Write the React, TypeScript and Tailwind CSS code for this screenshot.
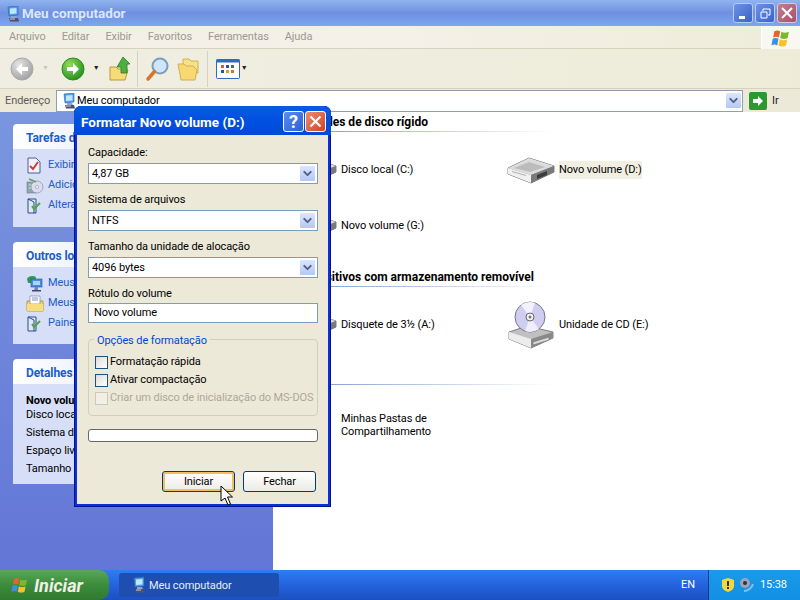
import { ChevronDown } from "lucide-react";
import type { ReactNode } from "react";

const font = "font-['Roboto','Liberation_Sans',sans-serif]";

function ComputerIcon({ size = 16 }: { size?: number }) {
  return (
    <svg width={size} height={size} viewBox="0 0 16 16">
      <path d="M3 1 13 0v9L4 10z" fill="#4f9ce8" stroke="#2a5fa8" strokeWidth="0.6" />
      <path d="M5 2.500 11.500 2v5.500L5 8z" fill="#bfe6ff" />
      <path d="M6 10h5l1 2H6z" fill="#8aa4d8" />
      <path d="M4 12h9l1 3.500H5z" fill="#50506c" />
      <path d="M5 12.500h5v1H5z" fill="#c8ccd8" />
    </svg>
  );
}

function FlagIcon({ size = 24 }: { size?: number }) {
  return (
    <svg width={size} height={size} viewBox="0 0 24 24">
      <path d="M4 4c2.500-1.500 4.500-1.500 7 0l-1.500 7.500c-2.500-1.500-4.500-1.500-7 0z" fill="#e8622c" />
      <path d="M12.500 4.500c3 1.500 5.500 1.500 9 0L20 12c-3 1.500-6 1.500-9 0z" fill="#7cb82f" />
      <path d="M2 13c2.500-1.500 4.500-1.500 7 0l-1.500 8c-2.500-1.500-4.500-1.500-7 0z" fill="#3f8fe0" />
      <path d="M10.500 13.500c3 1.500 6 1.500 9 0l-1.500 7.500c-3 1.500-6 1.500-9 0z" fill="#f5c22e" />
    </svg>
  );
}

function DriveIcon() {
  return (
    <svg width="48" height="28" viewBox="0 0 48 28">
      <path d="M1 12 22 2l25 8v6L24 27 1 18z" fill="#8c8c8c" stroke="#4c4c4c" strokeWidth="0.7" />
      <path d="M1 12 22 2l25 8-23 9z" fill="#dcdcdc" />
      <path d="M7 12 22 6l16 5-15 5z" fill="#bcbcbc" />
      <path d="M1 12l23 7v8L1 18z" fill="#f0f0f0" />
      <path d="M24 19l23-9v6L24 27z" fill="#7a7a7a" />
      <path d="M30 19l10-4v4l-10 4z" fill="#3c3c3c" />
      <path d="M5 15l14 4v1L5 16z" fill="#b0b0b0" />
    </svg>
  );
}

function CdIcon() {
  return (
    <svg width="48" height="48" viewBox="0 0 48 48">
      <path d="M2 31 20 25l26 6v6L24 47 2 38z" fill="#c0c0c0" stroke="#555" strokeWidth="0.7" />
      <path d="M2 31l22 7v9L2 38z" fill="#ececec" />
      <path d="M24 38l22-7v6L24 47z" fill="#8a8a8a" />
      <path d="M26 41l16-5v3l-16 5z" fill="#dadada" stroke="#666" strokeWidth="0.5" />
      <circle cx="23" cy="16" r="15" fill="#cfcdf0" stroke="#77778a" />
      <path d="M23 16 14 4a15 15 0 0 1 14-2z" fill="#f2f2ff" />
      <path d="M23 16l9 12a15 15 0 0 1-14 2z" fill="#eeeefc" />
      <circle cx="23" cy="16" r="4" fill="#f4f4f4" stroke="#666" />
      <circle cx="23" cy="16" r="1.500" fill="#777" />
    </svg>
  );
}

// little icons of the side panels
function TaskIcon({ kind }: { kind: string }) {
  if (kind === "info") {
    return (
      <svg width="16" height="17" viewBox="0 0 16 17">
        <path d="M2 1h8l4 4v11H2z" fill="#f0f2fa" stroke="#4a5f98" />
        <path d="M4 9l3 3 5-7" fill="none" stroke="#d83838" strokeWidth="2" />
      </svg>
    );
  }
  if (kind === "add") {
    return (
      <svg width="18" height="17" viewBox="0 0 18 17">
        <rect x="1" y="5" width="9" height="11" fill="#8fa8b0" stroke="#5a7078" strokeWidth="0.5" />
        <path d="M3 8h5M3 11h5" stroke="#dfe8e8" />
        <circle cx="11" cy="10" r="6" fill="#dcdcf0" stroke="#8080a0" strokeWidth="0.6" />
        <circle cx="11" cy="10" r="1.500" fill="#fff" stroke="#707088" strokeWidth="0.5" />
        <path d="M3 2l7 3" stroke="#60a060" strokeWidth="1.500" />
      </svg>
    );
  }
  if (kind === "net") {
    return (
      <svg width="18" height="17" viewBox="0 0 18 17">
        <path d="M1 4c1-3 6-4 9-2l-1 6H2z" fill="#2f9a50" />
        <rect x="5" y="4" width="11" height="8" fill="#4c8ce0" stroke="#24508c" strokeWidth="0.6" />
        <rect x="7" y="6" width="7" height="4" fill="#a8d4f8" />
        <path d="M9 12h3v3H8z" fill="#7088b8" />
        <path d="M6 15h9v1.500H6z" fill="#40486c" />
      </svg>
    );
  }
  if (kind === "docs") {
    return (
      <svg width="18" height="17" viewBox="0 0 18 17">
        <path d="M1 6h16v10H1z" fill="#f6d468" stroke="#b8963c" />
        <path d="M4 1h10v8H4z" fill="#fff" stroke="#7888b0" strokeWidth="0.7" />
        <path d="M6 3h6M6 5h6" stroke="#8090c0" />
        <path d="M1 9h16v7H1z" fill="#f8dc80" />
      </svg>
    );
  }
  return (
    <svg width="16" height="17" viewBox="0 0 16 17">
      <path d="M2 2h8v14H2z" fill="#dfe8f5" stroke="#284a88" />
      <path d="M2 2l6 3v11" fill="none" stroke="#284a88" />
      <path d="M6 9l2 3 6-6" fill="none" stroke="#58a048" strokeWidth="2" />
    </svg>
  );
}

function Panel({ title, height, children }: { title: string; height: number; children: ReactNode }) {
  return (
    <div className="w-[247px]">
      <div className="h-[25px] pt-[2px] rounded-t-[4px] bg-gradient-to-r from-white to-[#c6d3f7] pl-[13px] flex items-center text-[12px] font-bold text-[#215dc6]">
        {title}
      </div>
      <div className="bg-[#d6dff7] pl-[13px] pt-[6px]" style={{ height }}>
        {children}
      </div>
    </div>
  );
}

function TaskRow({ kind, label }: { kind: string; label: string }) {
  return (
    <div className="h-[20px] flex items-center text-[11px] text-[#215dc6]">
      <div className="w-[22px] shrink-0"><TaskIcon kind={kind} /></div>
      <span className="pt-px whitespace-nowrap">{label}</span>
    </div>
  );
}

function SectionHeader({ title }: { title: string }) {
  return (
    <div className="h-[19px] pl-[12px] text-[12px] font-bold tracking-normal leading-[19px] text-black relative">
      {title}
      <div className="absolute left-0 bottom-0 h-px w-[270px] bg-gradient-to-r from-[#6f93c8] to-white" />
    </div>
  );
}

function DriveItem({ label, cd, selected }: { label: string; cd?: boolean; selected?: boolean }) {
  return (
    <div className="h-[56px] flex items-center">
      <div className="w-[48px] flex justify-center">{cd ? <CdIcon /> : <DriveIcon />}</div>
      <span className={`ml-[4px] pt-px text-[11px] whitespace-nowrap text-black ${selected ? "bg-[#f1efe2]" : ""}`}>{label}</span>
    </div>
  );
}

function DropButton() {
  return (
    <div className="w-[17px] h-[17px] rounded-[2px] bg-gradient-to-b from-[#dce6fc] to-[#b4c8f4] border border-white flex items-center justify-center">
      <ChevronDown size={13} strokeWidth={3.5} className="text-[#4d6185]" />
    </div>
  );
}

function ComboField({ label, value }: { label: string; value: string }) {
  return (
    <div className="h-[47px]">
      <div className="h-[18px] text-[11px] leading-[20px] text-black">{label}</div>
      <div className="h-[21px] mt-[2px] bg-white border border-[#7f9db9] flex items-center justify-between pl-[3px] pr-px text-[11px] text-black">
        <span className="pt-px">{value}</span>
        <DropButton />
      </div>
    </div>
  );
}

function CheckRow({ label, disabled }: { label: string; disabled?: boolean }) {
  return (
    <div className={`h-[18px] flex items-center gap-[2px] text-[11px] whitespace-nowrap ${disabled ? "text-[#aca899]" : "text-black"}`}>
      <div className={`w-[13px] h-[13px] shrink-0 bg-gradient-to-br ${disabled ? "from-[#f2f0e6] to-[#f2f0e6] border border-[#cac8bb]" : "from-[#dcdcd7] to-white border border-[#1c5180]"}`} />
      <span className="pt-px">{label}</span>
    </div>
  );
}

function DialogButton({ label, focused }: { label: string; focused?: boolean }) {
  return (
    <div className={`w-[73px] h-[21px] pt-[2px] rounded-[3px] border border-[#003c74] flex items-center justify-center text-[11px] text-black bg-gradient-to-b from-white to-[#ecebe5] ${focused ? "shadow-[inset_0_0_0_2px_#f0c060]" : ""}`}>
      {label}
    </div>
  );
}

function FormatDialog() {
  return (
    <div className="absolute left-[74px] top-[106px] w-[257px] h-[401px] rounded-t-[7px] bg-[#0831d9] flex flex-col shadow-[inset_0_0_0_1px_#00138c]">
      <div className="h-[29px] shrink-0 pt-[2px] rounded-t-[7px] bg-gradient-to-b from-[#0a5be0] via-[#0050e0] to-[#0349d8] pl-[7px] pr-[5px] flex items-center justify-between">
        <span className="pt-px text-[13.500px] tracking-normal font-bold text-white whitespace-nowrap">Formatar Novo volume (D:)</span>
        <div className="flex gap-px">
          <div className="w-[21px] h-[21px] rounded-[3px] bg-gradient-to-br from-[#5b8cf0] to-[#2c5fd8] border border-white flex items-center justify-center text-[18px] font-bold text-white leading-none">?</div>
          <div className="w-[21px] h-[21px] rounded-[3px] bg-gradient-to-br from-[#ec8c6c] to-[#d04020] border border-white flex items-center justify-center">
            <svg width="13" height="13" viewBox="0 0 13 13"><path d="M1.500 1.500l10 10M11.500 1.500l-10 10" stroke="#fff" strokeWidth="2.200" /></svg>
          </div>
        </div>
      </div>
      <div className="flex-1 mx-[3px] mb-[3px] bg-[#ece9d8] pl-[11px] pr-[10px] pt-[8px] flex flex-col">
        <ComboField label="Capacidade:" value="4,87 GB" />
        <ComboField label="Sistema de arquivos" value="NTFS" />
        <ComboField label="Tamanho da unidade de alocação" value="4096 bytes" />
        <div className="h-[18px] text-[11px] leading-[20px] text-black">Rótulo do volume</div>
        <div className="h-[20px] mt-px bg-white border border-[#7f9db9] flex items-center pl-[5px] text-[11px] text-black">Novo volume</div>
        <div className="relative mt-[16px] h-[77px] border border-[#d0d0bf] rounded-[4px] pl-[6px] pt-[13px]">
          <div className="absolute left-[5px] top-[-6px] bg-[#ece9d8] px-[3px] text-[11px] leading-[14px] text-[#0046d5]">Opções de formatação</div>
          <CheckRow label="Formatação rápida" />
          <CheckRow label="Ativar compactação" />
          <CheckRow label="Criar um disco de inicialização do MS-DOS" disabled />
        </div>
        <div className="mt-[13px] h-[13px] bg-white border border-[#686868] rounded-[3px]" />
        <div className="mt-[29px] flex justify-end gap-[8px] pr-[2px]">
          <DialogButton label="Iniciar" focused />
          <DialogButton label="Fechar" />
        </div>
      </div>
    </div>
  );
}

function Toolbar() {
  return (
    <div className="h-[40px] shrink-0 bg-gradient-to-r from-[#f0eee2] to-[#eeecd9] border-b border-[#d8d2bd] flex items-center pl-[10px]">
      <svg width="24" height="24" viewBox="0 0 24 24">
        <defs>
          <radialGradient id="backFill" cx="0.35" cy="0.3" r="0.8">
            <stop offset="0" stopColor="#e4e4e4" />
            <stop offset="1" stopColor="#9c9c9c" />
          </radialGradient>
          <radialGradient id="nextFill" cx="0.35" cy="0.3" r="0.8">
            <stop offset="0" stopColor="#8fdc58" />
            <stop offset="1" stopColor="#1f8a1c" />
          </radialGradient>
        </defs>
        <circle cx="12" cy="12" r="11" fill="url(#backFill)" stroke="#a8a8a8" />
        <path d="M12 6l-6 6 6 6v-4h6v-4h-6z" fill="#fff" />
      </svg>
      <span className="ml-[8px] text-[7px] text-[#c8c8c0]">▼</span>
      <svg className="ml-[12px]" width="24" height="24" viewBox="0 0 24 24">
        <circle cx="12" cy="12" r="11" fill="url(#nextFill)" stroke="#2c8a20" />
        <path d="M12 6l6 6-6 6v-4H6v-4h6z" fill="#fff" />
      </svg>
      <span className="ml-[8px] text-[7px] text-[#222]">▼</span>
      <svg className="ml-[9px]" width="22" height="26" viewBox="0 0 22 26">
        <path d="M1 11h6l2 2h7l3 1-3 10H1z" fill="#f5dc78" stroke="#b89a3c" />
        <path d="M14 1l7 7h-3v9h-6V11h-4z" fill="#4cb040" stroke="#2c7a28" strokeWidth="0.8" />
      </svg>
      <div className="ml-[6px] w-px h-[36px] bg-[#d8d2bd]" />
      <svg className="ml-[7px]" width="25" height="26" viewBox="0 0 25 26">
        <circle cx="15" cy="10" r="7.500" fill="#cfe6fa" stroke="#7d9cc0" strokeWidth="2" />
        <path d="M9.500 15.500 3 23" stroke="#d4762c" strokeWidth="3.500" strokeLinecap="round" />
      </svg>
      <svg className="ml-[7px]" width="24" height="24" viewBox="0 0 24 24">
        <path d="M6 2h6l2 2h7v12H6z" fill="#f8e08a" stroke="#d0b050" />
        <path d="M1 7h6l2 2h7l4 4-2 10H4z" fill="#f7d872" stroke="#d0b050" />
      </svg>
      <div className="ml-[6px] w-px h-[36px] bg-[#d8d2bd]" />
      <svg className="ml-[8px]" width="24" height="20" viewBox="0 0 24 20">
        <rect x="0.500" y="0.500" width="23" height="19" rx="1" fill="#fff" stroke="#2c6cb8" />
        <rect x="0.500" y="0.500" width="23" height="3" fill="#2c6cb8" />
        <rect x="5" y="6" width="3" height="3" fill="#d06040" />
        <rect x="10" y="6" width="3" height="3" fill="#3050a0" />
        <rect x="15" y="6" width="3" height="3" fill="#308050" />
        <rect x="5" y="11" width="3" height="3" fill="#3050a0" />
        <rect x="10" y="11" width="3" height="3" fill="#d0a030" />
        <rect x="15" y="11" width="3" height="3" fill="#d07040" />
      </svg>
      <span className="ml-px text-[7px] text-[#222]">▼</span>
    </div>
  );
}

export default function App() {
  return (
    <div className={`relative w-[800px] h-[600px] overflow-hidden flex flex-col bg-white tracking-[-0.1px] ${font}`}>
      {/* title bar */}
      <div className="h-[26px] shrink-0 bg-gradient-to-b from-[#90b4ee] via-[#6f8fe0] to-[#7ba8f0] flex items-center justify-between pl-[5px] pr-[3px]">
        <div className="flex items-center gap-[1px] pt-px text-[13.500px] tracking-normal font-bold text-[#dbe7fb]">
          <ComputerIcon />
          Meu computador
        </div>
        <div className="flex gap-[2px]">
          <div className="w-[20px] h-[20px] rounded-[3px] bg-gradient-to-br from-[#6d93e6] to-[#3a62c8] border border-[#b9ccf0] flex items-end pl-[5px] pb-[3px]">
            <div className="w-[6px] h-[3px] bg-white" />
          </div>
          <div className="w-[20px] h-[20px] rounded-[3px] bg-gradient-to-br from-[#6d93e6] to-[#3a62c8] border border-[#b9ccf0] flex items-center justify-center">
            <svg width="11" height="11" viewBox="0 0 11 11" fill="none" stroke="#fff"><path d="M3 3V1h7v6H8M1 4h6v6H1z" /></svg>
          </div>
          <div className="w-[20px] h-[20px] rounded-[3px] bg-gradient-to-br from-[#c47e90] to-[#a8506a] border border-[#d8c8d8] flex items-center justify-center">
            <svg width="12" height="12" viewBox="0 0 12 12"><path d="M1 1l10 10M11 1l-10 10" stroke="#fff" strokeWidth="2" /></svg>
          </div>
        </div>
      </div>
      {/* menu */}
      <div className="h-[23px] pt-px shrink-0 bg-gradient-to-r from-[#f2efe5] via-[#f5f0e8] to-[#eeecd9] border-b border-[#d8d2bd] flex items-center pl-[9px] gap-[16px] text-[11px] text-[#9a9a8e] relative">
        <span>Arquivo</span>
        <span>Editar</span>
        <span>Exibir</span>
        <span>Favoritos</span>
        <span>Ferramentas</span>
        <span>Ajuda</span>
        <div className="absolute right-0 top-0 w-[39px] h-[23px] bg-[#f8f7f2] border-l border-white flex items-center justify-center">
          <FlagIcon size={20} />
        </div>
      </div>
      <Toolbar />
      {/* address bar */}
      <div className="h-[23px] shrink-0 bg-[#ece9d8] flex items-center pl-[5px] pr-[3px] text-[11px]">
        <span className="w-[50px] pt-px text-[#5d5d55]">Endereço</span>
        <div className="ml-px w-[687px] h-[22px] bg-white border border-[#8ea0b0] flex items-center pl-[4px] justify-between">
          <div className="flex items-center text-black"><ComputerIcon /><span className="pt-[2px]">Meu computador</span></div>
          <DropButton />
        </div>
        <div className="ml-[6px] w-[18px] h-[18px] rounded-[2px] bg-[#2a9a30] flex items-center justify-center">
          <svg width="12" height="12" viewBox="0 0 12 12"><path d="M6 1l5 5-5 5V8H1V4h5z" fill="#fff" /></svg>
        </div>
        <span className="ml-[5px] pt-px text-[#222]">Ir</span>
      </div>
      {/* body */}
      <div className="flex-1 min-h-0 flex">
        <div className="w-[273px] shrink-0 bg-gradient-to-b from-[#7a96df] to-[#6375d6] pl-[13px] pt-[12px] flex flex-col gap-[15px]">
          <Panel title="Tarefas do sistema" height={78}>
            <TaskRow kind="info" label="Exibir informações do sistema" />
            <TaskRow kind="add" label="Adicionar ou remover programas" />
            <TaskRow kind="panel" label="Alterar uma configuração" />
          </Panel>
          <Panel title="Outros locais" height={77}>
            <TaskRow kind="net" label="Meus locais de rede" />
            <TaskRow kind="docs" label="Meus documentos" />
            <TaskRow kind="panel" label="Painel de controle" />
          </Panel>
          <Panel title="Detalhes" height={100}>
            <div className="mt-[4px] text-[11px] leading-[14px] text-black font-bold">Novo volume (D:)</div>
            <div className="text-[11px] leading-[13px] text-black">Disco local</div>
            <div className="mt-[3px] text-[11px] leading-[18px] text-black">Sistema de arquivos: NTFS</div>
            <div className="text-[11px] leading-[18px] text-black">Espaço livre: 4,80 GB</div>
            <div className="text-[11px] leading-[18px] text-black">Tamanho total: 4,87 GB</div>
          </Panel>
        </div>
        <div className="flex-1 bg-white pt-px pl-[10px]">
          <SectionHeader title="Unidades de disco rígido" />
          <div className="mt-[10px] ml-[6px] grid grid-cols-[218px_auto]">
            <DriveItem label="Disco local (C:)" />
            <DriveItem label="Novo volume (D:)" selected />
            <DriveItem label="Novo volume (G:)" />
          </div>
          <div className="mt-[14px]"><SectionHeader title="Dispositivos com armazenamento removível" /></div>
          <div className="mt-[10px] ml-[6px] grid grid-cols-[218px_auto]">
            <DriveItem label="Disquete de 3½ (A:)" />
            <DriveItem label="Unidade de CD (E:)" cd />
          </div>
          <div className="mt-[31px] h-px w-[270px] bg-gradient-to-r from-[#6f93c8] to-white" />
          <div className="mt-[20px] ml-[6px] flex items-center h-[40px]">
            <div className="w-[48px]" />
            <div className="ml-[4px] text-[11px] leading-[13px] text-black">Minhas Pastas de<br />Compartilhamento</div>
          </div>
        </div>
      </div>
      {/* taskbar */}
      <div className="h-[30px] shrink-0 bg-gradient-to-b from-[#2f7df0] via-[#2463de] to-[#1c50c0] flex items-center text-white">
        <div className="w-[109px] h-[30px] rounded-r-[10px] bg-gradient-to-b from-[#58a858] via-[#3c8c3c] to-[#2f7a30] flex items-center pl-[11px] gap-[5px]">
          <FlagIcon size={18} />
          <span className="text-[18px] font-bold italic tracking-normal text-[#f0f0e8]">Iniciar</span>
        </div>
        <div className="ml-[10px] w-[160px] h-[24px] rounded-[3px] bg-[#1e4fb0] flex items-center pl-[12px] gap-[2px] text-[11px] text-[#e6ecfa]">
          <ComputerIcon />
          <span className="pt-[2px]">Meu computador</span>
        </div>
        <span className="ml-auto mr-[13px] pt-px text-[11px]">EN</span>
        <div className="w-[92px] h-[30px] bg-gradient-to-b from-[#1a9ae8] to-[#1290e4] border-l border-[#0a3a90] flex items-center pl-[12px]">
          <svg width="14" height="16" viewBox="0 0 14 16"><path d="M7 1l6 2v6c0 3-3 5-6 6-3-1-6-3-6-6V3z" fill="#f5d840" /><rect x="6" y="4" width="2" height="5" fill="#333" /><rect x="6" y="10" width="2" height="2" fill="#333" /></svg>
          <svg className="ml-[4px]" width="16" height="16" viewBox="0 0 16 16"><circle cx="6" cy="6" r="5" fill="#a0a0b8" /><circle cx="6" cy="6" r="2" fill="#303040" /><path d="M5 14c4 0 8-3 9-7" fill="none" stroke="#7fc0f0" strokeWidth="2" /></svg>
          <span className="ml-[5px] pt-px text-[11px]">15:38</span>
        </div>
      </div>
      <FormatDialog />
      {/* mouse cursor */}
      <svg className="absolute left-[220px] top-[485px]" width="13" height="21" viewBox="0 0 13 21">
        <path d="M1 1v15l4-3 3 7 2.500-1-3-7h5z" fill="#fff" stroke="#000" />
      </svg>
    </div>
  );
}
